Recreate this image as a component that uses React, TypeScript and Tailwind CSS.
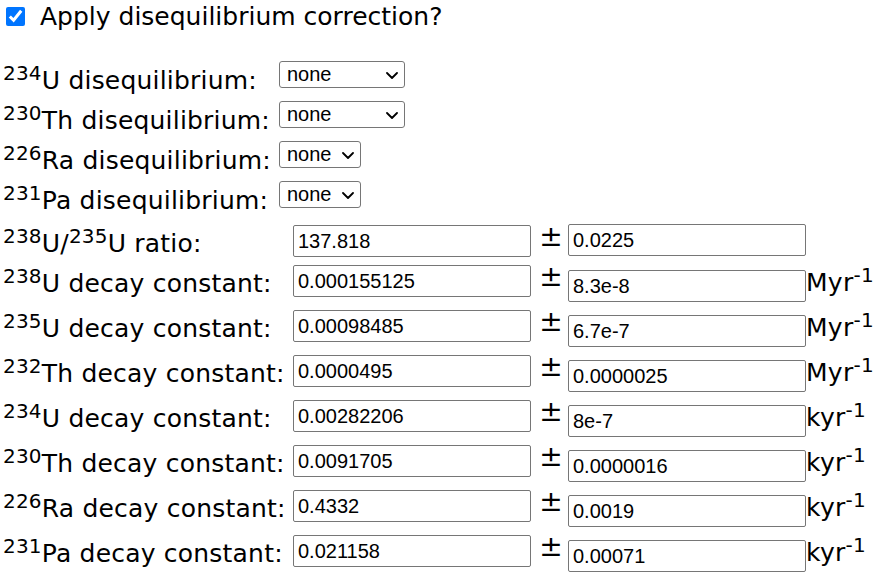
import { useState } from 'react';

// Disequilibrium / decay-constant settings panel.
// Labels use a Verdana-like face, inputs an Arial-like one.

interface Constant {
  mass: string;
  el: string;
  value: string;
  err: string;
  unit?: 'Myr' | 'kyr';
}

const DISEQ: { mass: string; el: string; wide: boolean }[] = [
  { mass: '234', el: 'U', wide: true },
  { mass: '230', el: 'Th', wide: true },
  { mass: '226', el: 'Ra', wide: false },
  { mass: '231', el: 'Pa', wide: false },
];

const CONSTANTS: Constant[] = [
  { mass: '238', el: 'U', value: '0.000155125', err: '8.3e-8', unit: 'Myr' },
  { mass: '235', el: 'U', value: '0.00098485', err: '6.7e-7', unit: 'Myr' },
  { mass: '232', el: 'Th', value: '0.0000495', err: '0.0000025', unit: 'Myr' },
  { mass: '234', el: 'U', value: '0.00282206', err: '8e-7', unit: 'kyr' },
  { mass: '230', el: 'Th', value: '0.0091705', err: '0.0000016', unit: 'kyr' },
  { mass: '226', el: 'Ra', value: '0.4332', err: '0.0019', unit: 'kyr' },
  { mass: '231', el: 'Pa', value: '0.021158', err: '0.00071', unit: 'kyr' },
];

const Sup = ({ children }: { children: React.ReactNode }) => (
  <sup className="text-[20px] top-[-9px]">{children}</sup>
);

const inputCls =
  "block w-[238px] h-[32px] shrink-0 border border-[#767676] rounded-[2px] bg-white pl-[4px] text-[20px] text-black font-['Liberation_Sans',Arial,sans-serif] outline-none";

function Chevron() {
  return (
    <svg width="12" height="7" viewBox="0 0 12 7" className="pointer-events-none absolute right-[7px] top-[11px]">
      <path d="M1 1l5 5 5-5" fill="none" stroke="#000" strokeWidth="1.8" strokeLinecap="round" strokeLinejoin="round" />
    </svg>
  );
}

function DiseqSelect({ wide }: { wide: boolean }) {
  const [v, setV] = useState('none');
  return (
    <div className={`relative mt-[4px] ${wide ? 'w-[126px]' : 'w-[82px]'}`}>
      <select
        value={v}
        onChange={(e) => setV(e.target.value)}
        className="block appearance-none w-full h-[27px] border border-[#767676] rounded-[3px] bg-white pl-[7px] text-[20px] leading-[25px] text-black font-['Liberation_Sans',Arial,sans-serif]"
      >
        <option value="none">none</option>
        {wide && <option value="measured">measured</option>}
        <option value="assumed">assumed</option>
      </select>
      <Chevron />
    </div>
  );
}

function ErrRow({ label, value, err, unit, tall }: {
  label: React.ReactNode; value: string; err: string; unit?: string; tall: boolean;
}) {
  return (
    <div className={`flex items-start ${tall ? 'h-[45px]' : 'h-[40px]'}`}>
      <div className="w-[293px] shrink-0 pl-[3px] mt-[8px] leading-[30px] tracking-[0.2px] whitespace-nowrap">{label}</div>
      <input className={`${inputCls} mt-[4px]`} defaultValue={value} />
      <div className="w-[37px] shrink-0 flex justify-center pl-[3px] mt-[1px] text-[28px] leading-[30px]">±</div>
      <input className={`${inputCls} ${unit ? 'mt-[9px]' : 'mt-[3px]'}`} defaultValue={err} />
      {unit && (
        <div className="mt-[7px] leading-[30px] tracking-[0.3px] whitespace-nowrap">
          {unit}<Sup>-1</Sup>
        </div>
      )}
    </div>
  );
}

export default function App() {
  const [apply, setApply] = useState(true);

  return (
    <main className="bg-white text-black min-h-screen text-[25px] font-['DejaVu_Sans',Verdana,sans-serif]">
      <div className="flex items-start h-[57px]">
        <input
          type="checkbox"
          checked={apply}
          onChange={(e) => setApply(e.target.checked)}
          className="w-[19px] h-[19px] ml-[6px] mt-[7px] accent-[#0075ff]"
        />
        <span className="ml-[15px] mt-[2px] leading-[30px]">Apply disequilibrium correction?</span>
      </div>

      {DISEQ.map((d) => (
        <div key={d.el} className="flex items-start h-[40px]">
          <div className="w-[279px] shrink-0 pl-[3px] mt-[9px] leading-[30px] tracking-[0.2px] whitespace-nowrap">
            <Sup>{d.mass}</Sup>{d.el} disequilibrium:
          </div>
          <DiseqSelect wide={d.wide} />
        </div>
      ))}

      <div className="mt-[4px]">
        <ErrRow
          tall={false}
          label={<><Sup>238</Sup>U/<Sup>235</Sup>U ratio:</>}
          value="137.818"
          err="0.0225"
        />
        {CONSTANTS.map((c) => (
          <ErrRow
            key={c.mass + c.el}
            tall
            label={<><Sup>{c.mass}</Sup>{c.el} decay constant:</>}
            value={c.value}
            err={c.err}
            unit={c.unit}
          />
        ))}
      </div>
    </main>
  );
}
